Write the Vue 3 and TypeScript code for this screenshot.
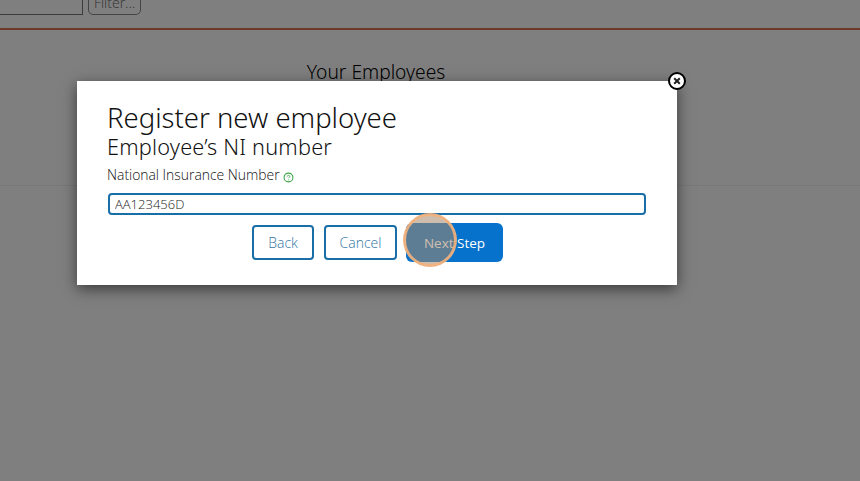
<template>
  <div class="page">
    <div class="filter-bar">
      <input class="filter-input" type="text" />
      <button class="filter-button" type="button">Filter...</button>
    </div>
    <h2 class="page-title">Your Employees</h2>
    <div class="table-head"></div>

    <div class="overlay"></div>
    <div class="modal">
      <button class="close" type="button" aria-label="Close">
        <svg width="18" height="18" viewBox="0 0 18 18">
          <circle cx="9" cy="9" r="8" fill="#fff" stroke="#000" stroke-width="2" />
          <path d="M6.2 6.2l5.6 5.6M11.8 6.2l-5.6 5.6" stroke="#222" stroke-width="2" fill="none" />
        </svg>
      </button>
      <h1 class="title">Register new employee</h1>
      <h2 class="subtitle">Employee’s NI number</h2>
      <label class="label">
        {{ label }}
        <svg class="help" width="11" height="11" viewBox="0 0 10 10">
          <circle cx="5" cy="5" r="4" fill="none" stroke="#3aa648" stroke-width="1" />
          <path d="M3.8 4.2c0-1.5 2.4-1.5 2.4 0 0 .8-1.2.8-1.2 1.5M5 6.8v.7" stroke="#3aa648" stroke-width=".8" fill="none" />
        </svg>
      </label>
      <input class="ni-input" type="text" :value="niNumber" />
      <div class="actions">
        <button class="btn outline back" type="button">Back</button>
        <button class="btn outline cancel" type="button">Cancel</button>
        <button class="btn primary" type="button">Next Step</button>
      </div>
    </div>
    <div class="click-marker"></div>
  </div>
</template>

<script setup lang="ts">
const label = 'National Insurance Number'
const niNumber = 'AA123456D'
</script>

<style>
html,
body {
  margin: 0;
  background: #fff;
}
</style>

<style scoped>
.page {
  position: relative;
  width: 860px;
  height: 481px;
  overflow: hidden;
  background: #fff;
  font-family: 'Open Sans', sans-serif;
}

.filter-bar {
  display: flex;
  align-items: flex-start;
  gap: 5px;
  height: 38px;
  margin-top: -10px;
  margin-left: -60px;
  border-bottom: 2px solid #d8764f;
}

.filter-input {
  box-sizing: border-box;
  width: 143px;
  height: 25px;
  border: 1px solid #777;
  background: #fff;
}

.filter-button {
  box-sizing: border-box;
  width: 53px;
  height: 25px;
  padding: 0;
  border: 1px solid #888;
  border-radius: 5px;
  background: #fff;
  color: #666;
  font-family: 'Open Sans', sans-serif;
  font-weight: 300;
  font-size: 14px;
}

.page-title {
  margin: 31px 108px 0 0;
  text-align: center;
  font-family: 'Noto Sans', sans-serif;
  font-size: 19.2px;
  font-weight: 300;
  line-height: 22px;
  color: #000;
}

.table-head {
  height: 102px;
  border-bottom: 1px solid #f0f0f0;
}

.overlay {
  position: absolute;
  inset: 0;
  background: rgba(0, 0, 0, 0.5);
}

.modal {
  position: absolute;
  left: 77px;
  top: 81px;
  box-sizing: border-box;
  width: 600px;
  height: 204px;
  padding: 20px 30px 0;
  background: #fff;
  box-shadow: 0 4px 14px rgba(0, 0, 0, 0.55);
}

.close {
  position: absolute;
  top: -9px;
  right: -9px;
  width: 18px;
  height: 18px;
  padding: 0;
  border: none;
  background: none;
  line-height: 0;
}

.title {
  margin: 0;
  font-family: 'Noto Sans', sans-serif;
  font-size: 27.5px;
  font-weight: 350;
  line-height: 33px;
  color: #111;
}

.subtitle {
  margin: 0;
  font-family: 'Noto Sans', sans-serif;
  font-size: 21.7px;
  font-weight: 350;
  letter-spacing: 0.2px;
  line-height: 25px;
  color: #111;
}

.label {
  display: block;
  margin-top: 6px;
  font-size: 13.9px;
  font-weight: 300;
  line-height: 20px;
  color: #111;
}

.help {
  vertical-align: -3px;
  margin-left: 0;
}

.ni-input {
  display: block;
  box-sizing: border-box;
  width: 538px;
  height: 22px;
  margin: 8px 0 0 1px;
  padding: 0 5px;
  border: 2px solid #1a6ea8;
  border-radius: 4px;
  color: #222;
  font-family: 'Open Sans', sans-serif;
  font-size: 13px;
  font-weight: 300;
  outline: none;
}

.actions {
  display: flex;
  justify-content: center;
  align-items: center;
  gap: 10px;
  margin-top: 8px;
  margin-left: 1px;
}

.btn {
  box-sizing: border-box;
  height: 35px;
  padding: 0;
  border-radius: 4px;
  font-family: 'Open Sans', sans-serif;
  font-size: 14px;
}

.outline {
  border: 2px solid #1a6ea8;
  background: #fff;
  color: #2f76a4;
  font-weight: 300;
}

.back {
  width: 62px;
}

.cancel {
  width: 73px;
}

.primary {
  width: 97px;
  height: 39px;
  margin-left: -1px;
  border: none;
  border-radius: 6px;
  background: #0672cb;
  color: #fff;
  font-size: 13.5px;
}

.click-marker {
  position: absolute;
  left: 403px;
  top: 213px;
  box-sizing: border-box;
  width: 54px;
  height: 54px;
  border: 3px solid rgba(243, 178, 126, 0.9);
  border-radius: 50%;
  background: rgba(165, 135, 105, 0.55);
}
</style>
